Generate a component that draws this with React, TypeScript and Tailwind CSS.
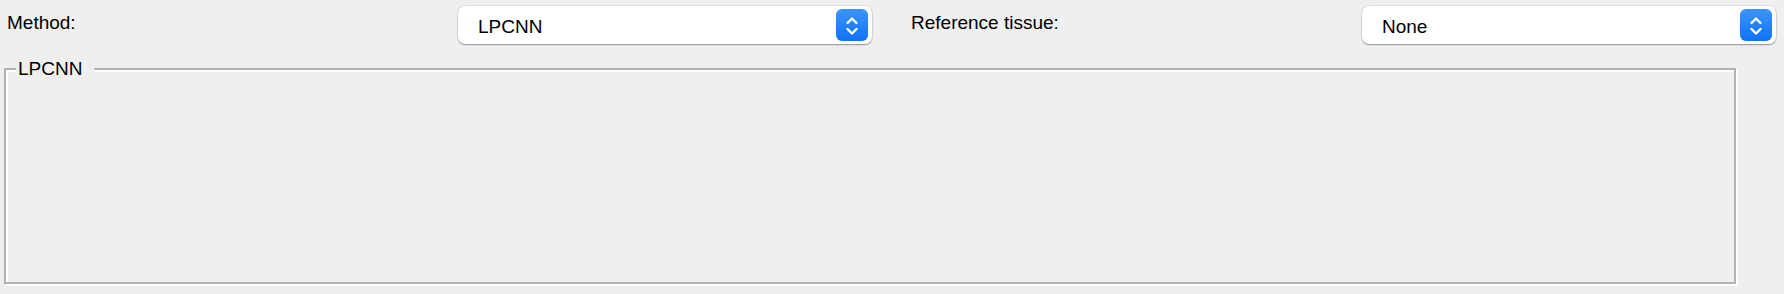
import React from "react";

function Chevrons() {
  return (
    <svg width="32" height="32" viewBox="0 0 32 32" fill="none">
      <polyline points="11.5,14 16,9.5 20.5,14" stroke="white" strokeWidth="2.3" strokeLinecap="round" strokeLinejoin="round" />
      <polyline points="11.5,20 16,24.5 20.5,20" stroke="white" strokeWidth="2.3" strokeLinecap="round" strokeLinejoin="round" />
    </svg>
  );
}

function Select({ value }: { value: string }) {
  return (
    <div className="flex h-[38px] w-[414px] items-center justify-between rounded-[7px] bg-white pl-[20px] pr-[4px] shadow-[0_0_0_0.5px_rgba(0,0,0,0.12),0_1px_1.5px_rgba(0,0,0,0.35)]">
      <span className="pt-[4px] text-[19px] leading-[22px] text-black">{value}</span>
      <div className="flex h-[32px] w-[32px] items-center justify-center rounded-[6px] bg-gradient-to-b from-[#3b93ff] to-[#0c72f7]">
        <Chevrons />
      </div>
    </div>
  );
}

function Field({ label, value }: { label: string; value: string }) {
  return (
    <div className="flex w-[865px] items-start justify-between">
      <span className="mt-[6px] text-[19px] leading-[22px] text-black">{label}</span>
      <Select value={value} />
    </div>
  );
}

export default function App() {
  return (
    <div
      className="h-[294px] w-full bg-[#efefef] pt-[6px]"
      style={{ fontFamily: '"Liberation Sans", Arial, Helvetica, sans-serif' }}
    >
      <div className="flex gap-[39px] pl-[7px] pr-[8px]">
        <Field label="Method:" value="LPCNN" />
        <Field label="Reference tissue:" value="None" />
      </div>
      <div className="relative ml-[4px] mt-[24px] h-[216px] w-[1732px] border-2 border-[#b2b2b2] shadow-[2px_2px_0_#ffffff,inset_2px_2px_0_#ffffff]">
        <span className="absolute left-[10px] top-[-12px] bg-[#efefef] pl-[2px] pr-[12px] text-[19px] leading-[22px] text-black">
          LPCNN
        </span>
      </div>
    </div>
  );
}
